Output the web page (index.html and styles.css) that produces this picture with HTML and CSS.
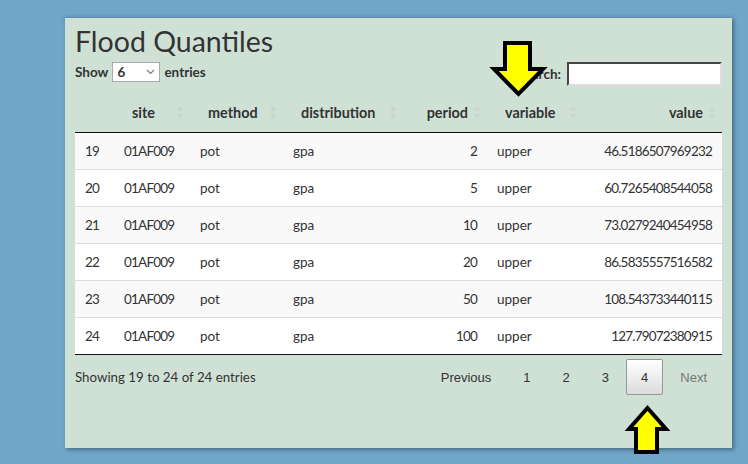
FILE: index.html
```html
<!DOCTYPE html>
<html>
<head>
<meta charset="utf-8">
<link rel="stylesheet" href="styles.css">
</head>
<body>
<div class="page">
  <div class="prev-card"></div>
  <div class="card">
    <h2 class="title">Flood Quantiles</h2>
    <div class="controls">
      <div class="length">Show <span class="select"><span class="sel-val">6</span><svg class="chev" width="9" height="6" viewBox="0 0 9 6"><path d="M1 1 L4.5 4.5 L8 1" fill="none" stroke="#777" stroke-width="1.1"/></svg></span> entries</div>
      <div class="search">Search: <input class="search-input" type="search"></div>
    </div>
    <table class="dt">
      <colgroup>
        <col class="c-idx"><col class="c-site"><col class="c-method"><col class="c-dist"><col class="c-period"><col class="c-var"><col class="c-value">
      </colgroup>
      <thead>
        <tr>
          <th class="blank"></th>
          <th class="sort">site<span class="si"></span></th>
          <th class="sort">method<span class="si"></span></th>
          <th class="sort">distribution<span class="si"></span></th>
          <th class="sort num">period<span class="si"></span></th>
          <th class="sort">variable<span class="si"></span></th>
          <th class="sort num">value<span class="si"></span></th>
        </tr>
      </thead>
      <tbody>
        <tr class="odd"><td class="dg">19</td><td class="dg">01AF009</td><td>pot</td><td>gpa</td><td class="num dg">2</td><td>upper</td><td class="num dg">46.5186507969232</td></tr>
        <tr class="even"><td class="dg">20</td><td class="dg">01AF009</td><td>pot</td><td>gpa</td><td class="num dg">5</td><td>upper</td><td class="num dg">60.7265408544058</td></tr>
        <tr class="odd"><td class="dg">21</td><td class="dg">01AF009</td><td>pot</td><td>gpa</td><td class="num dg">10</td><td>upper</td><td class="num dg">73.0279240454958</td></tr>
        <tr class="even"><td class="dg">22</td><td class="dg">01AF009</td><td>pot</td><td>gpa</td><td class="num dg">20</td><td>upper</td><td class="num dg">86.5835557516582</td></tr>
        <tr class="odd"><td class="dg">23</td><td class="dg">01AF009</td><td>pot</td><td>gpa</td><td class="num dg">50</td><td>upper</td><td class="num dg">108.543733440115</td></tr>
        <tr class="even"><td class="dg">24</td><td class="dg">01AF009</td><td>pot</td><td>gpa</td><td class="num dg">100</td><td>upper</td><td class="num dg">127.79072380915</td></tr>
      </tbody>
    </table>
    <div class="footer">
      <div class="info">Showing 19 to 24 of 24 entries</div>
      <div class="paginate">
        <span class="pbtn">Previous</span>
        <span class="pbtn">1</span>
        <span class="pbtn">2</span>
        <span class="pbtn">3</span>
        <span class="pbtn current">4</span>
        <span class="pbtn disabled">Next</span>
      </div>
    </div>
  </div>
</div>
<svg class="arrows" width="748" height="464" viewBox="0 0 748 464">
  <polygon points="505,43 530,43 530,69 543,69 518.5,94 494,69 505,69" fill="#ffff00" stroke="#000" stroke-width="4" stroke-linejoin="miter"/>
  <polygon points="647.5,408 666,429 657,429 657,452 636,452 636,429 629,429" fill="#ffff00" stroke="#000" stroke-width="4" stroke-linejoin="miter"/>
</svg>
</body>
</html>
```

FILE: styles.css
```css
html, body {
  margin: 0;
  padding: 0;
}
body {
  width: 748px;
  height: 464px;
  overflow: hidden;
  background: #6fa6c9;
  font-family: Lato, "Noto Sans", sans-serif;
  color: #333;
  position: relative;
}
.page {
  padding-left: 65px;
  width: 667px;
}
.prev-card {
  height: 0;
  box-shadow: 0 1px 4px 1px rgba(0, 0, 0, 0.35);
}
.card {
  margin-top: 18px;
  height: 430px;
  box-sizing: border-box;
  padding: 7px 10px 0 10px;
  background: #cfe1d5;
  box-shadow: 2px 2px 4px rgba(0, 0, 0, 0.35);
}
.title {
  margin: 0;
  font-size: 28.5px;
  line-height: 33px;
  font-weight: 400;
  color: #333;
}
.controls {
  margin-top: 4px;
  display: flex;
  justify-content: space-between;
  align-items: flex-start;
  height: 24px;
  font-size: 13.5px;
  font-weight: 700;
}
.length {
  display: flex;
  align-items: center;
  gap: 4px;
  height: 20px;
}
.select {
  box-sizing: border-box;
  width: 48px;
  height: 20px;
  background: #fff;
  border: 1px solid #aaa;
  display: flex;
  align-items: center;
  justify-content: space-between;
  padding: 0 4px 0 4px;
  font-weight: 700;
}
.chev {
  display: block;
}
.search {
  display: flex;
  align-items: center;
  gap: 6px;
  height: 24px;
}
.search-input {
  box-sizing: border-box;
  width: 155px;
  height: 24px;
  margin: 0;
  border: 2px inset #9a9a9a;
  border-right-color: #ddd;
  border-bottom-color: #ddd;
  background: #fff;
}
.dt {
  margin-top: 6px;
  width: 647px;
  border-collapse: separate;
  border-spacing: 0;
  table-layout: fixed;
  font-size: 13.5px;
}
.c-idx { width: 39px; }
.c-site { width: 76px; }
.c-method { width: 93px; }
.c-dist { width: 120px; }
.c-period { width: 84px; }
.c-var { width: 96px; }
.c-value { width: 139px; }
.dt th {
  position: relative;
  height: 40px;
  padding: 0 19px 0 18px;
  text-align: left;
  font-size: 14.4px;
  font-weight: 700;
  border-bottom: 1px solid #111;
  white-space: nowrap;
}
.dt th.num {
  text-align: right;
}
.si {
  position: absolute;
  right: 6px;
  top: 14px;
  width: 8px;
  height: 13px;
  opacity: 0.55;
}
.si::before, .si::after {
  content: "";
  position: absolute;
  left: 1px;
  width: 0;
  height: 0;
  border-left: 3.5px solid transparent;
  border-right: 3.5px solid transparent;
}
.si::before {
  top: 0;
  border-bottom: 5px solid #c4cfc8;
}
.si::after {
  bottom: 0;
  border-top: 5px solid #c4cfc8;
}
.dt td {
  height: 36px;
  padding: 0 10px;
  border-top: 1px solid #ddd;
  white-space: nowrap;
}
.dt td.dg {
  letter-spacing: -0.8px;
}
.dt tbody tr:first-child td {
  border-top: none;
}
.dt tbody tr:last-child td {
  border-bottom: 1px solid #111;
}
.dt td.num {
  text-align: right;
}
.odd { background: #f9f9f9; }
.even { background: #fff; }
.footer {
  margin-top: 4px;
  display: flex;
  justify-content: space-between;
  align-items: center;
  width: 647px;
  font-size: 13.3px;
}
.paginate {
  display: flex;
  align-items: center;
  font-family: "Liberation Sans", Arial, sans-serif;
  font-size: 13px;
}
.pbtn {
  box-sizing: border-box;
  height: 36px;
  display: flex;
  align-items: center;
  padding: 0 14px;
  margin-left: 2px;
  border: 1px solid transparent;
  border-radius: 2px;
  color: #333;
}
.pbtn.current {
  border-color: #979797;
  background: linear-gradient(to bottom, #ffffff 0%, #dcdcdc 100%);
}
.pbtn.disabled {
  color: #777;
}
.arrows {
  position: absolute;
  left: 0;
  top: 0;
  pointer-events: none;
}
```
